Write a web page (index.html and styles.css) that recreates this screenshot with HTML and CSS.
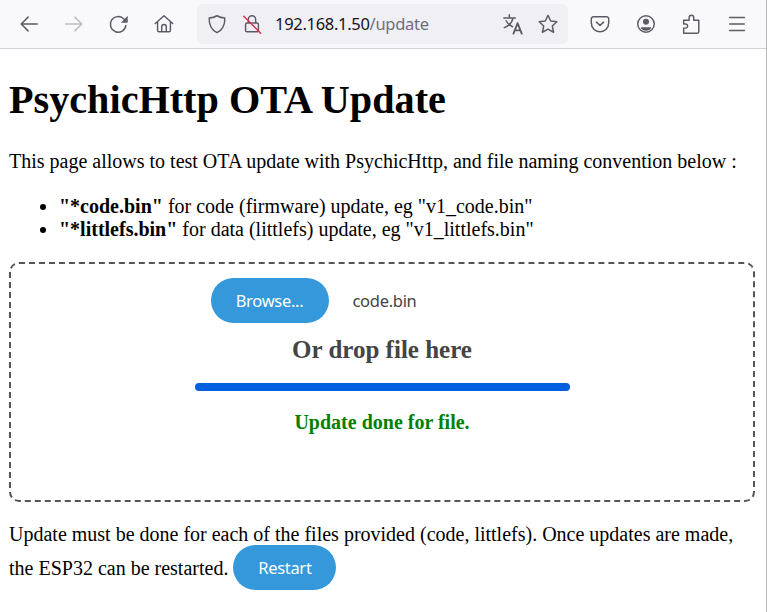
FILE: index.html
```html
<!DOCTYPE html>
<html lang="en">
<head>
<meta charset="utf-8">
<title>PsychicHttp OTA Update</title>
<link rel="stylesheet" href="styles.css">
</head>
<body>
<div class="window">
  <header class="toolbar">
    <div class="nav">
      <svg class="icon" viewBox="0 0 24 24"><path d="M21 12H4M11 4.5 3.5 12l7.500 7.500"/></svg>
      <svg class="icon faded" viewBox="0 0 24 24"><path d="M3 12h17M13 4.500l7.500 7.500-7.500 7.500"/></svg>
      <svg class="icon" viewBox="0 0 24 24"><path d="M19.500 13.500A8.500 8.500 0 1 1 17 6.300L20 9"/><path class="fill" d="M21.500 3v7.500H14z"/></svg>
      <svg class="icon" viewBox="0 0 24 24"><path d="M2.500 11.500 12 3l9.500 8.500M5 9.500V19a1.500 1.500 0 0 0 1.500 1.500h11A1.500 1.500 0 0 0 19 19V9.500M9.500 20.500V15a2.500 2.500 0 0 1 5 0v5.500"/></svg>
    </div>
    <div class="urlbar">
      <svg class="icon shield" viewBox="0 0 24 24"><path d="M12 3c3 1.700 5.500 2.300 8.500 2.500C20.800 13 18 18.500 12 21.500 6 18.500 3.200 13 3.500 5.500 6.500 5.300 9 4.700 12 3z"/></svg>
      <svg class="icon lock" viewBox="0 0 24 24"><path d="M8 10V7a4 4 0 0 1 8 0v3M6.500 11h11a1.500 1.500 0 0 1 1.500 1.500V19a1.500 1.500 0 0 1-1.500 1.500h-11A1.500 1.500 0 0 1 5 19v-6.500A1.500 1.500 0 0 1 6.500 11z"/><path class="slash" d="M3 3.500 21.500 22"/></svg>
      <span class="url">192.168.1.50<span class="url-path">/update</span></span>
      <svg class="icon translate" viewBox="0 0 24 24"><path d="M2 5.500h12.500M8 2v3.500M12 5.500c-1 4.500-4.500 8.500-9.500 10.500M4.500 8.500c1.500 3 4 5 7 6.500"/><path class="bold" d="m12.500 22.500 4.500-11.500 4.500 11.500M14 19h6"/></svg>
      <svg class="icon star" viewBox="0 0 24 24"><path d="m12 2.500 2.900 6.200 6.800.9-5 4.600 1.400 6.800-6.100-3.400-6.100 3.400 1.400-6.800-5-4.600 6.800-.9z"/></svg>
    </div>
    <div class="tools">
      <svg class="icon" viewBox="0 0 24 24"><path d="M5 4h14a2.500 2.500 0 0 1 2.500 2.500V11a9.500 9.500 0 0 1-19 0V6.500A2.500 2.500 0 0 1 5 4z"/><path d="m8 10 4 3.500 4-3.500"/></svg>
      <svg class="icon" viewBox="0 0 24 24"><circle cx="12" cy="12" r="9"/><circle class="fill" cx="12" cy="9.500" r="3.300"/><path class="fill" d="M6.500 15.500h11v1.500a7.500 7.500 0 0 1-11 0z"/></svg>
      <svg class="icon" viewBox="0 0 24 24"><path d="M4 22v-5.500h2.500a2.300 2.300 0 0 0 0-4.500H4V8h6V5a2.500 2.500 0 0 1 5 0v3h5.500v12.500A1.500 1.500 0 0 1 19 22z"/></svg>
      <svg class="icon" viewBox="0 0 24 24"><path d="M4 5h16M4 12h16M4 19h16"/></svg>
    </div>
  </header>
  <main class="page">
    <h1>PsychicHttp OTA Update</h1>
    <p class="intro">This page allows to test OTA update with PsychicHttp, and file naming convention below :</p>
    <ul class="rules">
      <li><b>"*code.bin"</b> for code (firmware) update, eg "v1_code.bin"</li>
      <li><b>"*littlefs.bin"</b> for data (littlefs) update, eg "v1_littlefs.bin"</li>
    </ul>
    <section class="dropzone">
      <div class="file-row">
        <span class="btn">Browse...</span>
        <span class="file-name">code.bin</span>
      </div>
      <h3 class="drop-title">Or drop file here</h3>
      <div class="progress"></div>
      <p class="status">Update done for file.</p>
    </section>
    <p class="footer-note">Update must be done for each of the files provided (code, littlefs). Once updates are made, the ESP32 can be restarted. <span class="btn btn-restart">Restart</span></p>
  </main>
</div>
</body>
</html>
```
FILE: styles.css
```css
* { box-sizing: border-box; }
html, body { margin: 0; padding: 0; background: #fff; }
body { font-family: "Liberation Serif", serif; color: #000; font-size: 20px; overflow: hidden; }
.window { width: 767px; height: 612px; border-right: 1px solid #b8b8bc; overflow: hidden; }
.toolbar { display: flex; align-items: center; height: 49px; background: #f9f9fb; border-bottom: 1px solid #cfcfd8; padding: 0 0 1px 0; }
.icon { width: 22px; height: 22px; fill: none; stroke: #5b5b66; stroke-width: 1.600; stroke-linecap: round; stroke-linejoin: round; flex: none; }
.icon .fill { fill: #5b5b66; stroke: none; }
.icon.faded { stroke: #bcbcc2; }
.nav { display: flex; align-items: center; gap: 23px; padding-left: 18px; width: 197px; }
.urlbar { display: flex; align-items: center; width: 371px; height: 40px; background: #f0f0f4; border-radius: 6px; padding-left: 9px; }
.lock { margin-left: 13px; }
.lock .slash { stroke: #e22850; }
.url { margin-left: 12px; font-family: "Noto Sans", sans-serif; font-size: 16.500px; letter-spacing: -0.3px; color: #15141a; white-space: nowrap; width: 227px; }
.url-path { color: #6f6f78; }
.translate .bold { stroke-width: 2; }
.translate { margin-right: 13px; }
.tools { display: flex; align-items: center; gap: 23.500px; margin-left: 21px; }
.page { padding: 0 11px 0 9px; }
h1 { font-size: 40.200px; line-height: 46px; margin: 28px 0 0; font-weight: bold; }
.intro { margin: 27px 0 0; line-height: 23px; white-space: nowrap; }
.rules { margin: 22px 0 0; padding-left: 50px; line-height: 23px; }
.dropzone { margin-top: 21px; margin-left: 0; height: 240px; width: 746px; border: 2px dashed #555; border-radius: 10px; padding-top: 14px; display: flex; flex-direction: column; align-items: center; color: #444; }
.file-row { display: flex; align-items: center; width: 372px; height: 45px; margin-left: 29px; }
.btn { display: inline-block; width: 118px; height: 45px; line-height: 45px; text-align: center; border-radius: 23px; background: #3498db; color: #fff; font-family: "Noto Sans", sans-serif; font-size: 16.500px; letter-spacing: -0.3px; vertical-align: middle; }
.file-name { margin-left: 24px; font-family: "Noto Sans", sans-serif; font-size: 16.500px; letter-spacing: -0.3px; color: #444; }
.drop-title { margin: 13px 0 0; font-size: 25px; line-height: 28px; font-weight: bold; }
.progress { width: 375px; height: 8px; margin-top: 19px; background: #0060df; border-radius: 4px; }
.status { margin: 20px 0 0; color: green; font-weight: bold; font-size: 20px; line-height: 22px; }
.footer-note { margin: 15px 0 0; line-height: 34px; }
.btn-restart { width: 103px; margin-top: -6px; line-height: 46px; }
```
